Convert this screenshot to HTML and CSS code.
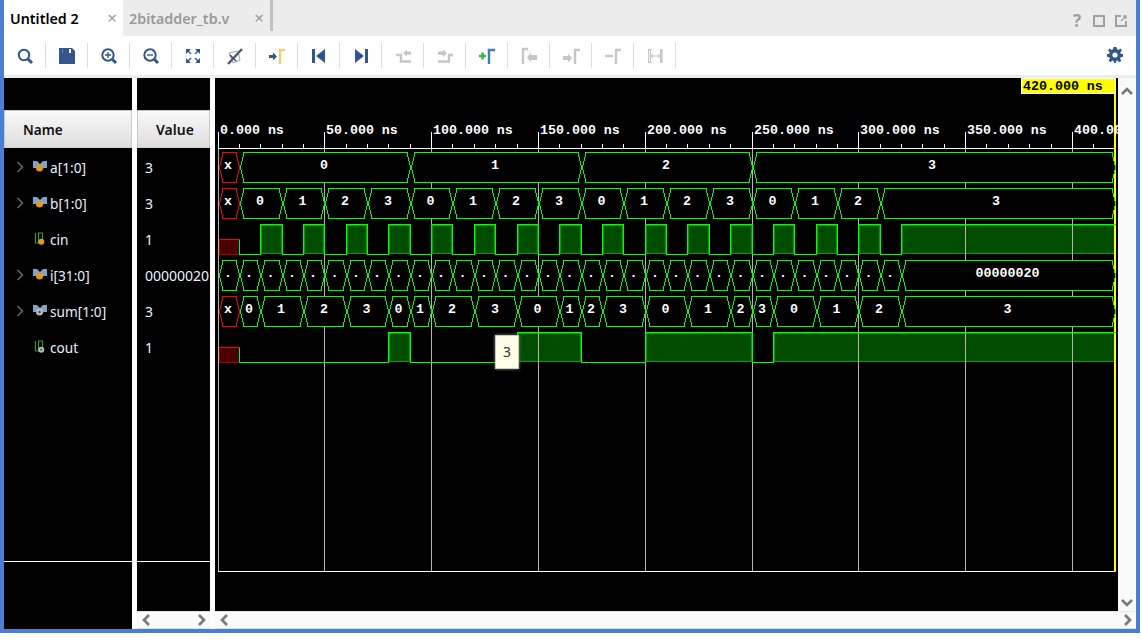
FILE: index.html
```html
<!DOCTYPE html>
<html lang="en">
<head>
<meta charset="utf-8">
<title>Untitled 2</title>
<link rel="stylesheet" href="styles.css">
</head>
<body>
<div class="app">
  <div class="tabs">
    <div class="tab tab-active"><span class="tab-label">Untitled 2</span><span class="tab-close">×</span></div>
    <div class="tab tab-second"><span class="tab-label">2bitadder_tb.v</span><span class="tab-close">×</span></div>
    <div class="tab-divider"></div>
    <div class="tab-tools">
      <span class="tab-help">?</span>
      <svg class="tab-tool" viewBox="0 0 12 12"><rect x="1" y="1" width="10" height="10" fill="none" stroke="#a0a0a0" stroke-width="2"/></svg>
      <svg class="tab-tool" viewBox="0 0 12 12"><path d="M6 1H1V11H11V6" fill="none" stroke="#a0a0a0" stroke-width="2"/><path d="M6 6L11 1M8 1H11V4" fill="none" stroke="#a0a0a0" stroke-width="1.4"/></svg>
    </div>
  </div>
  <div class="toolbar">
    <div class="tool"><svg viewBox="0 0 20 20"><circle cx="9" cy="9" r="5.2" class="ln"/><path d="M13 13L17 17" class="ln thick"/></svg></div>
    <div class="tool"><svg viewBox="0 0 20 20"><path d="M2 2H15L18 5V18H2Z" class="fl"/><rect x="12" y="3" width="2" height="4" fill="#fff"/><rect x="5" y="3" width="1" height="4" fill="#6d86b0"/></svg></div>
    <div class="tool"><svg viewBox="0 0 20 20"><circle cx="9" cy="9" r="5.7" class="ln"/><path d="M6 9H12M9 6V12" class="ln thin"/><path d="M13.5 13.5L17 17" class="ln thick"/></svg></div>
    <div class="tool"><svg viewBox="0 0 20 20"><circle cx="9" cy="9" r="5.7" class="ln"/><path d="M6 9H12" class="ln thin"/><path d="M13.5 13.5L17 17" class="ln thick"/></svg></div>
    <div class="tool"><svg viewBox="0 0 20 20"><path d="M3 3H8L3 8ZM17 3V8L12 3ZM3 17V12L8 17ZM17 17H12L17 12Z" class="fl"/><path d="M5 5L8 8M15 5L12 8M5 15L8 12M15 15L12 12" class="ln thin"/></svg></div>
    <div class="tool"><svg viewBox="0 0 20 20"><path d="M4 7L13 5L15 14L8 17Z" fill="none" stroke="#8aa0c0" stroke-width="1"/><path d="M3 18L17 3" fill="none" stroke="#555" stroke-width="2.4"/><path d="M5 9L11 15" fill="none" stroke="#34548c" stroke-width="1.6"/></svg></div>
    <div class="tool"><svg viewBox="0 0 20 20"><path d="M2 9H6V6.5L10 10.5L6 14.5V12H2Z" class="fl"/><path d="M13 18V4H18" fill="none" stroke="#e4d27c" stroke-width="2.4"/></svg></div>
    <div class="tool"><svg viewBox="0 0 20 20"><rect x="3" y="3" width="3" height="14" class="fl"/><path d="M16 3V17L7 10Z" class="fl"/></svg></div>
    <div class="tool"><svg viewBox="0 0 20 20"><path d="M4 3V17L13 10Z" class="fl"/><rect x="14" y="3" width="3" height="14" class="fl"/></svg></div>
    <div class="tool"><svg viewBox="0 0 20 20"><path d="M3 9H8V15.500H18" class="gr thickg"/><path d="M18 5.500V8.500H14V10.500L10 7L14 3.500V5.500Z" class="gf"/></svg></div>
    <div class="tool"><svg viewBox="0 0 20 20"><path d="M3 15.500H14V9H18" class="gr thickg"/><path d="M3 5.500V9H8V11L12 7.200L8 3.500V5.500Z" class="gf"/></svg></div>
    <div class="tool"><svg viewBox="0 0 20 20"><path d="M2 10H9M5.500 6.500V13.500" fill="none" stroke="#3fb54a" stroke-width="2.600"/><path d="M12 18V4H18" fill="none" stroke="#3f7fb5" stroke-width="2.400"/></svg></div>
    <div class="tool"><svg viewBox="0 0 20 20"><path d="M4 18V3H9" class="gr thickg"/><path d="M18 9V14H12V16.500L8 11.500L12 6.500V9Z" class="gf"/></svg></div>
    <div class="tool"><svg viewBox="0 0 20 20"><path d="M2 10H7V7.500L11 12L7 16.500V14H2Z" class="gf"/><path d="M14 18V4H19" class="gr thickg"/></svg></div>
    <div class="tool"><svg viewBox="0 0 20 20"><path d="M2 10H10" class="gr thickg"/><path d="M13 18V4H18" class="gr thickg"/></svg></div>
    <div class="tool"><svg viewBox="0 0 20 20"><rect x="3.500" y="3.500" width="2" height="13" fill="none" stroke="#c4c4c4"/><rect x="15" y="3" width="2.500" height="14" fill="#c4c4c4"/><path d="M6 10H15M8 8L6 10L8 12M13 8L15 10L13 12" fill="none" stroke="#c4c4c4"/></svg></div>
    <svg class="gear" viewBox="0 0 16 16"><path d="M6.500 0H9.500L10 2.300L11.500 2.900L13.500 1.600L15 3.800L13.300 5.300L13.700 6.800L16 7.200V9.800L13.700 10.200L13.100 11.700L14.400 13.700L12.200 15.300L10.500 13.600L9.300 14L8.900 16H7.100L6.700 14L5.400 13.600L3.600 15.300L1.600 13.500L2.900 11.700L2.300 10.200L0 9.800V7.200L2.300 6.800L2.700 5.300L1 3.800L2.500 1.600L4.500 2.900L6 2.300Z" fill="#34548c"/><circle cx="8" cy="8" r="2.600" fill="#fff"/></svg>
  </div>
  <div class="toolbar-rule"></div>
  <div class="main">
    <div class="col col-name">
      <div class="col-top"></div>
      <div class="col-head head-name">Name</div>
      <div class="rows">
        <div class="row"><svg class="chev" viewBox="0 0 8 12"><path d="M1.500 1L6.500 6L1.500 11"/></svg><svg class="sig" viewBox="0 -1 14 14"><path d="M0 0H4L7 3L10 0H14V7H11L7 9L3 7H0Z" fill="#7ea6c4"/><circle cx="6.500" cy="7" r="3.500" fill="#e8952e"/></svg><span class="sig-name">a[1:0]</span></div>
        <div class="row"><svg class="chev" viewBox="0 0 8 12"><path d="M1.500 1L6.500 6L1.500 11"/></svg><svg class="sig" viewBox="0 -1 14 14"><path d="M0 0H4L7 3L10 0H14V7H11L7 9L3 7H0Z" fill="#7ea6c4"/><circle cx="6.500" cy="7" r="3.500" fill="#e8952e"/></svg><span class="sig-name">b[1:0]</span></div>
        <div class="row"><span class="chev-slot"></span><svg class="sig" viewBox="0 0 14 14"><path d="M2.500 1V11H5.500V1H9.500V8" fill="none" stroke="#2f9e3f" stroke-width="1.100"/><circle cx="8.300" cy="9.700" r="3" fill="#e8952e"/></svg><span class="sig-name">cin</span></div>
        <div class="row"><svg class="chev" viewBox="0 0 8 12"><path d="M1.500 1L6.500 6L1.500 11"/></svg><svg class="sig" viewBox="0 -1 14 14"><path d="M0 0H4L7 3L10 0H14V7H11L7 9L3 7H0Z" fill="#7ea6c4"/><circle cx="6.500" cy="7" r="3.500" fill="#e8952e"/></svg><span class="sig-name">i[31:0]</span></div>
        <div class="row"><svg class="chev" viewBox="0 0 8 12"><path d="M1.500 1L6.500 6L1.500 11"/></svg><svg class="sig" viewBox="0 -1 14 14"><path d="M0 0H4L7 3L10 0H14V7H11L7 9L3 7H0Z" fill="#7ea6c4"/><circle cx="6.500" cy="7" r="3.500" fill="#b9b9b9"/><circle cx="6.500" cy="7" r="1.300" fill="#555"/></svg><span class="sig-name">sum[1:0]</span></div>
        <div class="row"><span class="chev-slot"></span><svg class="sig" viewBox="0 0 14 14"><path d="M2.500 1V11H5.500V1H9.500V8" fill="none" stroke="#2f9e3f" stroke-width="1.100"/><circle cx="8.300" cy="9.700" r="3" fill="#b9b9b9"/><circle cx="8.300" cy="9.700" r="1.100" fill="#555"/></svg><span class="sig-name">cout</span></div>
      </div>
      <div class="col-foot foot-name"></div>
    </div>
    <div class="col col-value">
      <div class="col-top"></div>
      <div class="col-head head-value">Value</div>
      <div class="rows">
        <div class="row val">3</div>
        <div class="row val">3</div>
        <div class="row val">1</div>
        <div class="row val">00000020</div>
        <div class="row val">3</div>
        <div class="row val">1</div>
      </div>
      <div class="col-foot foot-value"></div>
      <div class="hscroll"><svg class="arrow" viewBox="0 0 10 14"><path d="M8 2L3 7L8 12"/></svg><svg class="arrow" viewBox="0 0 10 14"><path d="M2 2L7 7L2 12"/></svg></div>
    </div>
    <div class="col col-wave">
      <div class="wave-body">
        <div class="wave">
          <svg id="wave" class="wave-svg" viewBox="215 78 903 533" width="903" height="533"></svg>
          <div class="tooltip">3</div>
        </div>
        <div class="vscroll"><svg class="arrow" viewBox="0 0 14 10"><path d="M2 8L7 3L12 8"/></svg><svg class="arrow" viewBox="0 0 14 10"><path d="M2 2L7 7L12 2"/></svg></div>
      </div>
      <div class="hscroll hscroll-wave"><svg class="arrow" viewBox="0 0 10 14"><path d="M8 2L3 7L8 12"/></svg><svg class="arrow" viewBox="0 0 10 14"><path d="M2 2L7 7L2 12"/></svg></div>
    </div>
  </div>
</div>
<script src="wave.js"></script>
</body>
</html>
```
FILE: styles.css
```css
* { box-sizing: border-box; }
html, body { margin: 0; padding: 0; background: #fff; }
body { font-family: "Noto Sans", "Open Sans", sans-serif; font-size: 14px; }
.app {
  width: 1140px; height: 633px;
  border-left: 4px solid #4a7fd1; border-right: 4px solid #4a7fd1; border-bottom: 4px solid #4a7fd1;
  display: flex; flex-direction: column; overflow: hidden;
}
.tabs { height: 36px; background: #ececec; display: flex; flex: none; }
.tab { height: 36px; display: flex; align-items: center; position: relative; font-size: 14.3px; }
.tab-active { width: 119px; background: #fff; padding-left: 6px; font-weight: 600; color: #000; }
.tab-second { width: 147px; padding-left: 6px; color: #999; font-weight: 600; }
.tab-label { white-space: nowrap; }
.tab-close { position: absolute; top: 9px; right: 6px; font-size: 17px; line-height: 18px; color: #999; font-weight: 400; }
.tab-divider { width: 3px; height: 31px; background: #c0c0c0; }
.tab-tools { margin-left: auto; display: flex; align-items: center; gap: 10px; padding-right: 9px; padding-top: 6px; }
.tab-help { width: 12px; font-size: 17px; font-weight: 700; color: #a0a0a0; text-align: center; line-height: 20px; }
.tab-tool { width: 12px; height: 12px; }
.toolbar { height: 39px; flex: none; background: #fff; display: flex; align-items: center; position: relative; }
.tool { width: 42px; height: 25px; border-right: 1px solid #dcdcdc; display: flex; align-items: center; justify-content: center; }
.tool svg { width: 20px; height: 20px; }
.ln { fill: none; stroke: #34548c; stroke-width: 2; }
.ln.thick { stroke-width: 3; }
.ln.thin { stroke-width: 1.4; }
.fl { fill: #34548c; }
.gr { fill: none; stroke: #c6c6c6; stroke-width: 2; }
.gr.thickg { stroke-width: 2.4; }
.gf { fill: #c6c6c6; }
.gear { position: absolute; right: 13px; top: 11px; width: 16px; height: 16px; }
.toolbar-rule { height: 3px; flex: none; background: #ececec; }
.main { flex: 1; display: flex; gap: 5px; background: #fff; min-height: 0; }
.col { display: flex; flex-direction: column; }
.col-name { width: 128px; background: #000; }
.col-value { width: 73px; background: #000; }
.col-wave { flex: 1; min-width: 0; }
.col-top { height: 32px; flex: none; }
.col-head {
  height: 38px; flex: none; background: linear-gradient(#f9f9f9, #dedede);
  border: 1px solid #c8c8c8; border-bottom-color: #d0d0d0;
  display: flex; align-items: center; font-weight: 600; color: #111;
}
.head-name { padding-left: 18px; font-size: 13.6px; }
.head-value { padding-left: 18px; }
.rows { flex: 1; padding-top: 1px; }
.row { height: 36px; display: flex; align-items: center; padding-left: 12px; color: #fff; white-space: nowrap; }
.val { padding-left: 8px; color: #eaf3ff; }
.chev { width: 8px; height: 12px; flex: none; }
.chev path { fill: none; stroke: #6a6a6a; stroke-width: 1.500; }
.chev-slot { width: 8px; flex: none; }
.sig { width: 14px; height: 14px; margin-left: 9px; margin-right: 3px; flex: none; }
.sig-name { color: #e6f1ff; font-size: 13.7px; }
.col-foot { flex: none; border-top: 1px solid #fff; }
.foot-name { height: 68px; }
.foot-value { height: 50px; }
.hscroll { height: 18px; flex: none; background: #fafafa; border-top: 1px solid #e6e6e6; border-bottom: 1px solid #dcdcdc; display: flex; align-items: center; justify-content: space-between; padding: 0 3px 0 4px; }
.arrow { width: 10px; height: 14px; flex: none; }
.arrow path { fill: none; stroke: #777; stroke-width: 2.600; }
.wave-body { flex: 1; display: flex; min-height: 0; }
.wave { width: 903px; height: 533px; background: #000; position: relative; overflow: hidden; flex: none; }
.wave-svg { display: block; shape-rendering: crispEdges; }
.vscroll { flex: 1; background: #fafafa; display: flex; flex-direction: column; align-items: center; justify-content: space-between; padding: 8px 0 3px; }
.vscroll .arrow { width: 14px; height: 10px; }
.tooltip {
  position: absolute; left: 280px; top: 257px; width: 24px; height: 34px;
  background: #ffffe8; border: 1px solid #c8c8b8; box-shadow: 0 0 3px #888;
  color: #333; text-align: center; line-height: 32px; font-size: 14px;
}
.t-ruler { font: 700 13.300px "Liberation Mono", monospace; fill: #fff; }
.t-val { font: 700 13.300px "Liberation Mono", monospace; fill: #fff; text-anchor: middle; }
.t-cursor { font: 700 13.300px "Liberation Mono", monospace; fill: #000; }
.bus { fill: #000; stroke: #00ff00; stroke-width: 1; }
.bus-x { stroke: #ff0000; }
.wire { fill: none; stroke: #00ff00; stroke-width: 1; }
.wire-high { fill: #004d00; stroke: #00a000; stroke-width: 1; }
.wire-x { fill: #4a0000; stroke: #a00000; stroke-width: 1; }
.wire-x-top { fill: none; stroke: #ff0000; stroke-width: 1; }
.grid { stroke: #b4b4b4; stroke-width: 1; }
.ruler { stroke: #fff; stroke-width: 1; }
.cursor { fill: #ffff00; }
.cursor-box { fill: #ffff00; stroke: #fff; stroke-width: 1; }
```
FILE: wave.js
```js
(function () {
  var NS = "http://www.w3.org/2000/svg";
  var svg = document.getElementById("wave");
  var X0 = 218, SCALE = 2.136, END = 420;
  function x(t) { return Math.floor(X0 + t * SCALE); }
  function el(name, attrs, text) {
    var e = document.createElementNS(NS, name);
    for (var k in attrs) e.setAttribute(k, attrs[k]);
    if (text !== undefined) e.textContent = text;
    svg.appendChild(e);
    return e;
  }
  function bus(top, segs) {
    var bot = top + 30, mid = top + 15, s = 3.5;
    segs.forEach(function (g) {
      var a = x(g[0]) + 1.5, b = x(g[1]) + 0.5;
      var pts = [a, mid + 0.5, a + s, top + 0.5, b - s, top + 0.5, b, mid + 0.5, b - s, bot + 0.5, a + s, bot + 0.5];
      el("polygon", { "class": g[2] === "x" ? "bus bus-x" : "bus", points: pts.join(" ") });
    });
  }
  function busText(top, segs) {
    segs.forEach(function (g) {
      var wide = g[1] - g[0] > 100 ? 2 : 1;
      el("text", { "class": "t-val", x: (x(g[0]) + x(g[1])) / 2 + 0.5 - wide, y: top + 17 }, g[2]);
    });
  }
  function seq(times, labels) {
    var out = [];
    for (var i = 0; i < labels.length; i++) out.push([times[i], times[i + 1], labels[i]]);
    return out;
  }
  var a = seq([0, 10, 90, 170, 250, 420], ["x", "0", "1", "2", "3"]);
  var bt = [0], bl = ["x"];
  for (var t = 10; t <= 310; t += 20) { bt.push(t); bl.push(String(((t - 10) / 20) % 4)); }
  bt.push(END);
  var b = seq(bt, bl);
  var i = [];
  for (var n = 0; n < 32; n++) i.push([n * 10, n * 10 + 10, "."]);
  i.push([320, END, "00000020"]);
  var sum = seq([0, 10, 20, 40, 60, 80, 90, 100, 120, 140, 160, 170, 180, 200, 220, 240, 250, 260, 280, 300, 320, 420],
    ["x", "0", "1", "2", "3", "0", "1", "2", "3", "0", "1", "2", "3", "0", "1", "2", "3", "0", "1", "2", "3"]);
  var cinHigh = [];
  for (var c = 20; c <= 300; c += 20) cinHigh.push([c, c + 10]);
  cinHigh.push([320, END]);
  var coutHigh = [[80, 90], [140, 170], [200, 250], [260, END]];

  function wireFills(low, spans) {
    var high = low - 30;
    spans.forEach(function (p) {
      el("rect", { "class": "wire-high", x: x(p[0]) + 1.5, y: high + 1.5, width: x(p[1]) - x(p[0]) - 2, height: 28 });
    });
    el("rect", { "class": "wire-x", x: X0 + 1.5, y: low - 14.5, width: x(10) - X0 - 1, height: 15 });
  }
  function wireLine(low, spans) {
    var high = low - 30;
    var pts = [x(10) + 0.5, low - 14.5, x(10) + 0.5, low + 0.5];
    spans.forEach(function (p) {
      pts.push(x(p[0]) + 0.5, low + 0.5, x(p[0]) + 0.5, high + 0.5, x(p[1]) + 0.5, high + 0.5);
      if (p[1] < END) pts.push(x(p[1]) + 0.5, low + 0.5);
    });
    if (spans[spans.length - 1][1] < END) pts.push(x(END) + 0.5, low + 0.5);
    el("polyline", { "class": "wire", points: pts.join(" ") });
    el("path", { "class": "wire-x-top", d: "M" + (X0 + 1.5) + " " + (low - 14.5) + "H" + (x(10) + 0.5) });
  }

  wireFills(254, cinHigh);
  wireFills(362, coutHigh);

  for (var m = 50; m <= 400; m += 50) {
    el("path", { "class": "grid", d: "M" + (x(m) + 0.5) + " 148V571" });
  }
  el("path", { "class": "grid", d: "M" + (X0 + 0.5) + " 132V571" });
  el("path", { "class": "ruler", d: "M" + X0 + " 148.5H1115M" + X0 + " 571.5H1115" });
  for (var r = 0; r <= 410; r += 10) {
    var major = r % 50 === 0;
    el("path", { "class": "ruler", d: "M" + (x(r) + 0.5) + " " + (major ? 132 : 144) + "V148" });
  }
  el("rect", { "class": "cursor", x: 1114, y: 78, width: 2, height: 494 });
  el("rect", { "class": "cursor-box", x: 1021.5, y: 78.5, width: 94, height: 15 });
  el("text", { "class": "t-cursor", x: 1023, y: 90 }, "420.000 ns");
  for (var l = 0; l <= 400; l += 50) {
    el("text", { "class": "t-ruler", x: x(l) + 2, y: 134 }, l + ".000 ns");
  }

  bus(152, a); bus(188, b); bus(260, i); bus(296, sum);
  wireLine(254, cinHigh);
  wireLine(362, coutHigh);
  busText(152, a); busText(188, b); busText(260, i); busText(296, sum);
})();
```
